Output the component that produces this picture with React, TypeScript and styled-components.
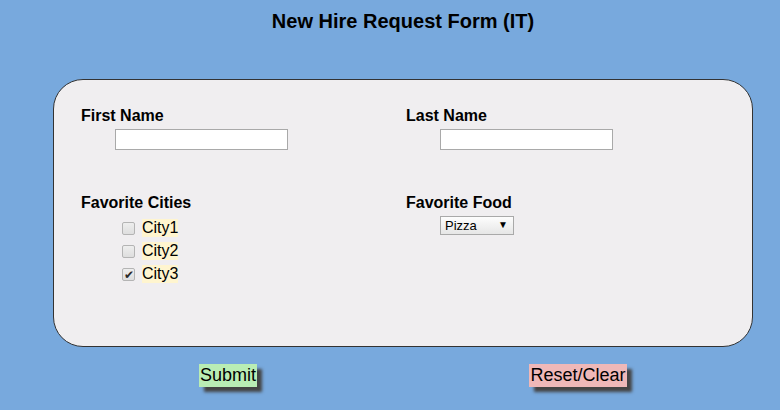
import React, { useState } from "react";
import styled, { createGlobalStyle } from "styled-components";

const GlobalStyle = createGlobalStyle`
  html, body {
    margin: 0;
    padding: 0;
    background: #78a9dd;
    font-family: "Liberation Sans", Arial, sans-serif;
  }
`;

const Page = styled.div`
  width: 780px;
  height: 410px;
  overflow: hidden;
`;

const Title = styled.h1`
  margin: 0 0 0 53px;
  width: 700px;
  padding-top: 9px;
  text-align: center;
  font-size: 20px;
  line-height: 24px;
  font-weight: bold;
  color: #000;
`;

const Panel = styled.form`
  box-sizing: border-box;
  margin: 46px 0 0 53px;
  width: 700px;
  height: 268px;
  background: #f0eef0;
  border: 1px solid #333;
  border-radius: 30px;
  padding: 27px 0 0 27px;
  display: grid;
  grid-template-columns: 325px 325px;
  grid-template-rows: 87px auto;
`;

const Field = styled.div`
  display: flex;
  flex-direction: column;
  align-items: flex-start;
`;

const Label = styled.div`
  font-size: 16px;
  line-height: 18px;
  font-weight: bold;
`;

const TextInput = styled.input`
  box-sizing: border-box;
  margin: 4px 0 0 34px;
  width: 173px;
  height: 21px;
  border: 1px solid #a9a9a9;
  background: #fff;
  padding: 1px 2px;
  font-size: 13px;
`;

const CheckList = styled.div`
  margin: 7px 0 0 37px;
  display: flex;
  flex-direction: column;
  gap: 5px;
`;

const CheckRow = styled.label`
  display: flex;
  align-items: center;
  height: 18px;
  font-size: 16px;
`;

const Box = styled.input`
  appearance: none;
  -webkit-appearance: none;
  box-sizing: border-box;
  position: relative;
  width: 13px;
  height: 13px;
  margin: 0 7px 0 4px;
  border: 1px solid #b4b4b4;
  border-radius: 2px;
  background: linear-gradient(#eeeeee, #dedede);

  &:checked::before {
    content: "✔";
    position: absolute;
    left: 1px;
    top: -1px;
    font-size: 12px;
    line-height: 14px;
    color: #2a2a2a;
  }
`;

const CityName = styled.span`
  background: #fff5cf;
  line-height: 18px;
`;

const SelectWrap = styled.div`
  position: relative;
  margin: 4px 0 0 34px;
`;

const Select = styled.select`
  box-sizing: border-box;
  display: block;
  width: 74px;
  height: 19px;
  font-family: "Liberation Sans", Arial, sans-serif;
  font-size: 13px;
  color: #000;
  border: 1px solid #a9a9a9;
  border-radius: 0;
  padding: 0 0 0 4px;
  appearance: none;
  -webkit-appearance: none;
  background: linear-gradient(#fdfdfd, #e6e6e6);
`;

const Arrow = styled.span`
  position: absolute;
  right: 6px;
  top: 3px;
  font-size: 10px;
  line-height: 12px;
  pointer-events: none;
`;

const Actions = styled.div`
  margin-left: 53px;
  width: 700px;
  padding-top: 17px;
  display: grid;
  grid-template-columns: 1fr 1fr;
  justify-items: center;
`;

const Button = styled.button<{ $bg: string }>`
  font-family: "Liberation Sans", Arial, sans-serif;
  font-size: 18px;
  line-height: 21px;
  padding: 1px 1px;
  border: none;
  background: ${(p) => p.$bg};
  color: #000;
  box-shadow: 5px 5px 3px #444;
`;

const cities = ["City1", "City2", "City3"];

export default function App() {
  const [checked, setChecked] = useState<Record<string, boolean>>({ City3: true });

  return (
    <Page>
      <GlobalStyle />
      <Title>New Hire Request Form (IT)</Title>
      <Panel>
        <Field>
          <Label>First Name</Label>
          <TextInput type="text" />
        </Field>
        <Field>
          <Label>Last Name</Label>
          <TextInput type="text" />
        </Field>
        <Field>
          <Label>Favorite Cities</Label>
          <CheckList>
            {cities.map((c) => (
              <CheckRow key={c}>
                <Box
                  type="checkbox"
                  checked={!!checked[c]}
                  onChange={() => setChecked({ ...checked, [c]: !checked[c] })}
                />
                <CityName>{c}</CityName>
              </CheckRow>
            ))}
          </CheckList>
        </Field>
        <Field>
          <Label>Favorite Food</Label>
          <SelectWrap>
            <Select defaultValue="Pizza">
              <option>Pizza</option>
              <option>Burger</option>
              <option>Tacos</option>
            </Select>
            <Arrow>▼</Arrow>
          </SelectWrap>
        </Field>
      </Panel>
      <Actions>
        <Button type="button" $bg="#b9edb4">Submit</Button>
        <Button type="button" $bg="#efb8b8">Reset/Clear</Button>
      </Actions>
    </Page>
  );
}
